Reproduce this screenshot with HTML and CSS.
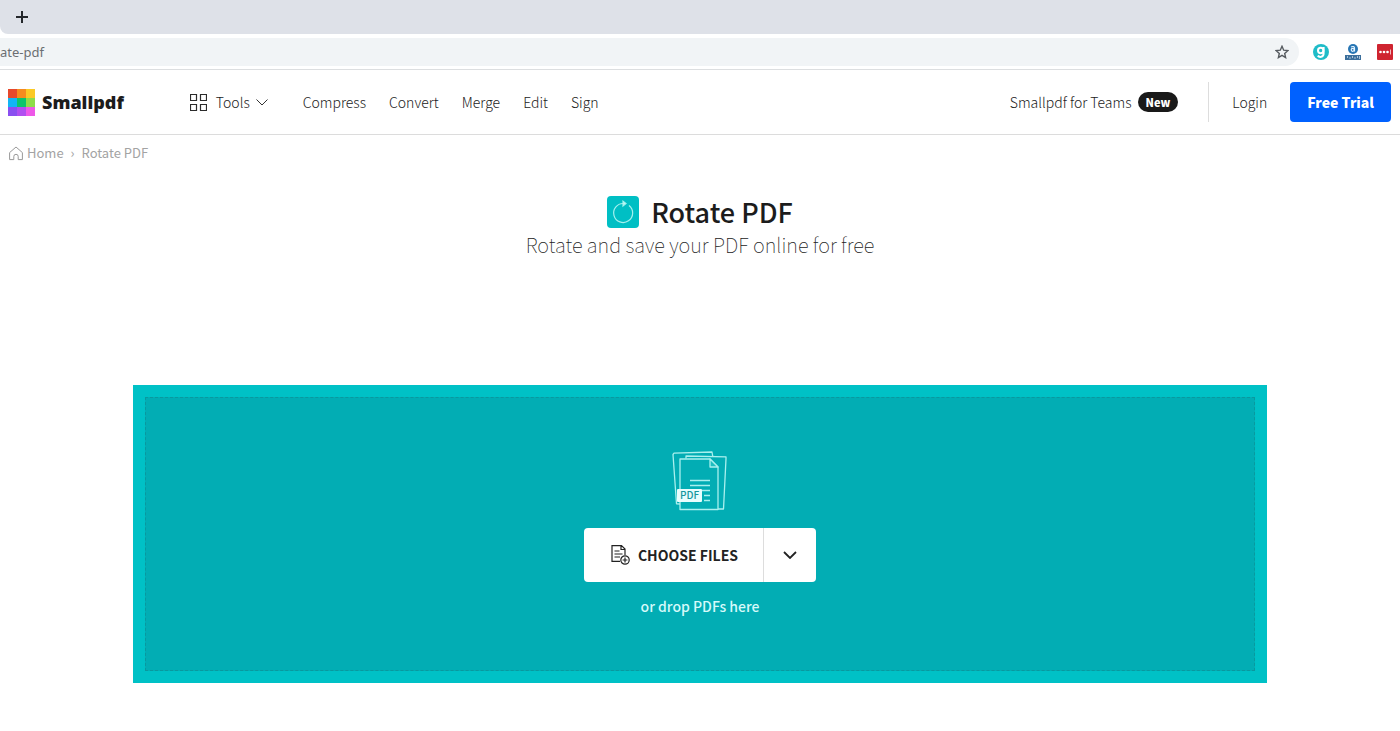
FILE: index.html
```html
<!DOCTYPE html>
<html lang="en">
<head>
<meta charset="utf-8">
<title>Rotate PDF</title>
<link rel="stylesheet" href="styles.css">
</head>
<body>
<div class="browser">
  <div class="tabs">
    <button class="tab-add" type="button" aria-label="New tab"><svg width="12" height="12" viewBox="0 0 12 12"><path d="M6 0v12M0 6h12" stroke="#24272b" stroke-width="2"/></svg></button>
  </div>
  <div class="toolbar">
    <div class="address">
      <input class="url" type="text" value="ate-pdf" aria-label="Address">
      <button class="plain" type="button" aria-label="Bookmark"><svg width="14" height="14" viewBox="0 0 14 14"><path d="M7 1.300l1.700 3.900 4.200.4-3.200 2.800.9 4.200L7 10.400l-3.600 2.200.9-4.200L1.100 5.600l4.200-.4z" fill="none" stroke="#555a5f" stroke-width="1.400" stroke-linejoin="miter"/></svg></button>
    </div>
    <div class="extensions">
      <svg width="16" height="16" viewBox="0 0 16 16"><circle cx="8" cy="8" r="8" fill="#1fbcc8"/><g fill="none" stroke="#fff" stroke-width="2"><circle cx="7.700" cy="6.500" r="2.700"/><path d="M10.600 3v6.500c0 4-4.500 4-5.800 2.200"/></g></svg>
      <svg width="16" height="16" viewBox="0 0 16 16"><circle cx="8" cy="5" r="5" fill="#2876b4"/><g fill="none" stroke="#e4f4ff" stroke-width="1.200"><circle cx="7.700" cy="5.800" r="1.500"/><path d="M6 3c2-1 3.500-.4 3.500 1.200v3.400"/></g><path d="M0 11h16v5H0z" fill="#3c6f9c"/><path d="M2.500 12v2M5 13v2M7.500 12v2M10 13v2M12.500 12v2M14.500 12v3" stroke="#c9dbe9" stroke-width=".8"/></svg>
      <svg width="16" height="16" viewBox="0 0 16 16"><rect width="16" height="16" rx="1" fill="#cf2430"/><path d="M13.500 5.500v5" stroke="#f3b9bd"/><g fill="#fff"><circle cx="3.500" cy="8" r="1.300"/><circle cx="7" cy="8" r="1.300"/><circle cx="10.500" cy="8" r="1.300"/></g></svg>
    </div>
  </div>
</div>
<header class="header">
  <a class="brand" href="#">
    <svg width="27" height="27" viewBox="0 0 27 27"><path fill="#e6492d" d="M0 0h9v9H0z"/><path fill="#f68b1f" d="M9 0h9v9H9z"/><path fill="#fbc926" d="M18 0h9v9h-9z"/><path fill="#12b5f5" d="M0 9h9v9H0z"/><path fill="#0cc46c" d="M9 9h9v9H9z"/><path fill="#8fdc4a" d="M18 9h9v9h-9z"/><path fill="#8a4ff0" d="M0 18h9v9H0z"/><path fill="#b04ff0" d="M9 18h9v9H9z"/><path fill="#ee58e8" d="M18 18h9v9h-9z"/></svg>
    <span>Smallpdf</span>
  </a>
  <nav class="nav">
    <button class="tools" type="button">
      <svg width="17" height="17" viewBox="0 0 17 17"><path d="M.5.5h6v6h-6zM10.500.5h6v6h-6zM.5 10.500h6v6h-6zM10.500 10.500h6v6h-6z" fill="none" stroke="#2b2b2b" stroke-width="1.200"/></svg>
      <span>Tools</span>
      <svg class="caret" width="12" height="7" viewBox="0 0 12 7"><path d="M.5.5L6 6 11.500.5" fill="none" stroke="#333"/></svg>
    </button>
    <a href="#">Compress</a>
    <a href="#">Convert</a>
    <a href="#">Merge</a>
    <a href="#">Edit</a>
    <a href="#">Sign</a>
  </nav>
  <div class="account">
    <a class="teams" href="#">Smallpdf for Teams <span class="badge">New</span></a>
    <a class="login" href="#">Login</a>
    <a class="trial" href="#">Free Trial</a>
  </div>
</header>
<main>
  <nav class="crumbs" aria-label="Breadcrumb">
    <a href="#"><svg width="14" height="15" viewBox="0 0 14 15"><path d="M.6 6.600L7 1l6.400 5.600v7H9.200V10.500a2.200 2.200 0 0 0-4.400 0v3.100H.6z" fill="none" stroke="#999" stroke-linejoin="round"/></svg>Home</a>
    <span class="sep">›</span>
    <span>Rotate PDF</span>
  </nav>
  <section class="intro">
    <div class="title">
      <svg width="32" height="32" viewBox="0 0 32 32"><rect width="32" height="32" rx="4" fill="#00bfc4"/><g fill="none" stroke="#a5f1ee" stroke-width="1.200"><path d="M22 9.500A9.500 9.500 0 1 1 16.500 7.500"/><path d="M16 5.200l3 2.300-3 2.500z" fill="#c5fffa"/></g></svg>
      <h1>Rotate PDF</h1>
    </div>
    <p>Rotate and save your PDF online for free</p>
  </section>
  <section class="upload">
    <div class="drop">
      <svg width="56" height="60" viewBox="0 0 56 60"><g fill="none" stroke="#a9f0ee" stroke-width="1.300" stroke-linejoin="round"><path d="M8 53l-3.500-.2L1 3.500 2 2.200 40 1l.7 4M14 7.500V5l40 .8v2L51.500 58H46"/><path d="M8 38V8h30l8 8v42.500H8V51"/><path d="M38 8v8h8z" fill="#1fbdbf"/><path d="M18 29.500h20M18 34.500h20M30 39.500h8M32 44.500h6M32 49.500h6" stroke-width="1.500"/></g><rect x="5" y="38" width="25" height="13" rx="1" fill="#e8fdfd"/><text class="pdf-label" x="17.500" y="48" text-anchor="middle">PDF</text></svg>
      <div class="picker">
        <button class="choose" type="button">
          <svg width="19" height="20" viewBox="0 0 19 20"><g fill="none" stroke="#222" stroke-width="1.200"><path d="M9 16.400H1V.6h9.500L14 4v6M10 .8V4.500h4M3.500 6h5M3.500 9h8M3.500 12h5.500"/><circle cx="14" cy="15" r="4.200"/><path d="M14 12.600v4.800M11.600 15h4.800"/></g></svg>
          Choose files
        </button>
        <button class="more" type="button" aria-label="More sources"><svg width="14" height="8" viewBox="0 0 14 8"><path d="M1 1l6 6 6-6" fill="none" stroke="#222" stroke-width="1.800"/></svg></button>
      </div>
      <p>or drop PDFs here</p>
    </div>
  </section>
</main>
</body>
</html>
```
FILE: styles.css
```css
* { box-sizing: border-box; }
body { margin: 0; background: #fff; color: #222; font: 14px/20px "Noto Sans CJK SC", "Open Sans", sans-serif; }
a { color: inherit; text-decoration: none; }
button { margin: 0; padding: 0; border: 0; background: none; color: inherit; font: inherit; cursor: pointer; }
svg { display: block; flex: none; }
h1, p { margin: 0; }

.tabs { display: flex; align-items: center; height: 34px; padding-left: 16px; background: #dee1e8; border-bottom-left-radius: 8px; }
.toolbar { display: flex; align-items: center; gap: 14px; height: 36px; padding-right: 7px; border-bottom: 1px solid #dcdee0; }
.address { display: flex; flex: 1; align-items: center; height: 28px; padding-right: 10px; background: #f1f4f6; border-radius: 0 14px 14px 0; }
.url { flex: 1; min-width: 0; padding: 0; border: 0; outline: 0; background: none; color: #6b6e72; font: 13px/20px "Noto Sans", sans-serif; }
.extensions { display: flex; gap: 16px; }

.header { display: flex; align-items: center; height: 65px; padding: 0 9px 0 8px; border-bottom: 1px solid #dcdcdc; font-weight: 300; }
.brand { display: flex; align-items: center; gap: 7px; color: #1c1c1c; font: 900 18px/24px "Noto Sans", sans-serif; }
.nav { display: flex; align-items: center; gap: 23px; margin-left: 66px; }
.tools { display: flex; align-items: center; gap: 9px; margin-right: 12px; }
.caret { margin-left: -3px; }
.account { display: flex; align-items: center; margin-left: auto; }
.teams { display: flex; align-items: center; gap: 6px; padding-right: 30px; }
.badge { padding: 0 8px; border-radius: 10px; background: #191919; color: #fff; font-size: 11px; font-weight: 900; }
.login { padding: 10px 23px; border-left: 1px solid #ddd; }
.trial { padding: 10px 17px; border-radius: 4px; background: #0061ff; color: #fff; font-weight: 900; }

.crumbs { display: flex; align-items: center; gap: 7px; padding: 8px 9px; color: #a3a3a3; font-size: 13px; line-height: 20px; }
.crumbs a { display: flex; align-items: center; gap: 4px; }
.intro { padding-top: 23px; text-align: center; }
.title { display: flex; align-items: center; justify-content: center; gap: 12px; }
.title h1 { color: #1c1c1c; font-size: 27px; font-weight: 500; line-height: 36px; }
.intro p { color: #222; font-size: 20px; font-weight: 100; line-height: 30px; }
.upload { width: 81%; margin: 125px auto 0; padding: 12px; background: #00c1c6; }
.drop { display: flex; flex-direction: column; align-items: center; padding: 53px 0 54px; border: 1px dashed #0a989e; background: #02adb4; }
.pdf-label { fill: #16979d; font: 500 10px "Noto Sans CJK SC", sans-serif; }
.picker { display: flex; height: 54px; margin-top: 17px; border-radius: 4px; background: #fff; }
.choose { display: flex; align-items: center; gap: 8px; padding: 0 25px 0 27px; color: #222; font-size: 14px; font-weight: 700; text-transform: uppercase; }
.more { padding: 0 19px; border-left: 1px solid #ddd; }
.drop p { margin-top: 14px; color: #d5fafa; font-weight: 500; }
```
